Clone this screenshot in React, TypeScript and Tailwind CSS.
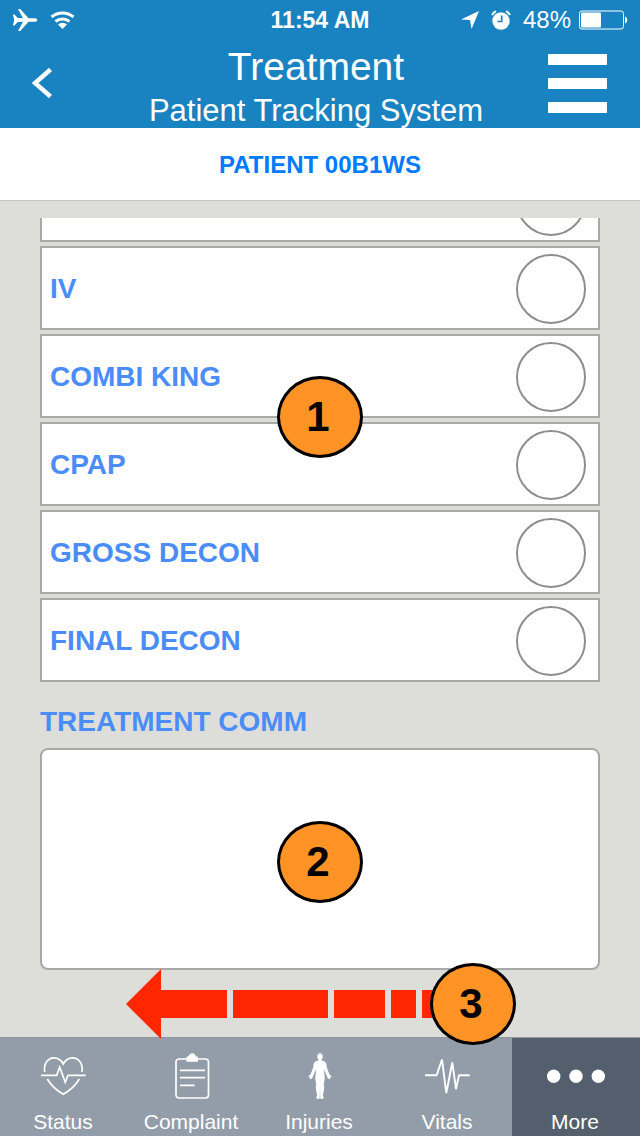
import type { ReactNode } from "react";

const treatments = ["IV", "COMBI KING", "CPAP", "GROSS DECON", "FINAL DECON"];

function Marker({ value, className }: { value: number; className: string }) {
  return (
    <span
      className={`pointer-events-none absolute z-20 flex h-[82px] w-[86px] items-center justify-center rounded-[50%] border-3 border-black bg-[#ff9326] pr-1 text-[42px] leading-none font-bold text-black ${className}`}
    >
      {value}
    </span>
  );
}

function StatusBar() {
  return (
    <div className="grid h-10 grid-cols-[1fr_auto_1fr] items-center px-3 text-2xl leading-none">
      <div className="flex items-center gap-3">
        <svg width="26" height="24" viewBox="0 0 26 24" fill="currentColor" aria-hidden="true">
          <path d="M1 6.500h1.500l3.300 3.600 5.200.2L6 1h2.300l8.200 9.200h6.300c1.400 0 2.500.7 2.500 1.800s-1.100 1.800-2.500 1.800h-6.300L8.300 23H6l5-9.300-5.200.2-3.300 3.600H1L2.200 12z" />
        </svg>
        <svg width="26" height="20" viewBox="0 0 26 20" fill="none" stroke="currentColor" strokeWidth="3" aria-hidden="true">
          <path d="M1.500 7a17 17 0 0 1 22 0M5.500 11.500a11 11 0 0 1 14 0" />
          <path d="M12.500 19l-4.500-4.500a6.500 6.500 0 0 1 9 0z" fill="currentColor" stroke="none" />
        </svg>
      </div>
      <span className="text-[23px] font-bold">11:54 AM</span>
      <div className="flex items-center justify-end gap-3">
        <svg width="18" height="18" viewBox="0 0 18 18" fill="currentColor" aria-hidden="true">
          <path d="M18 0L10.500 18 9 9 0 8.600z" />
        </svg>
        <svg width="20" height="20" viewBox="0 0 20 20" fill="none" stroke="currentColor" aria-hidden="true">
          <circle cx="10" cy="11" r="8.700" fill="currentColor" stroke="none" />
          <path d="M1 5a9 9 0 0 1 4-3.800M19 5a9 9 0 0 0-4-3.800" strokeWidth="2" />
          <path d="M10.700 5.500v6H6.500" stroke="#1983c1" strokeWidth="1.700" />
        </svg>
        <span>48%</span>
        <svg className="-ml-1" width="49" height="20" viewBox="0 0 49 20" aria-hidden="true">
          <rect x=".5" y="1" width="44" height="18" rx="2.500" fill="none" stroke="currentColor" />
          <rect x="2" y="2.500" width="20" height="15" rx="1" fill="currentColor" />
          <path d="M46 6.500c3 1 3 6 0 7z" fill="currentColor" />
        </svg>
      </div>
    </div>
  );
}

function Header() {
  return (
    <header className="bg-[#1983c1] text-white">
      <StatusBar />
      <div className="grid h-[88px] grid-cols-[1fr_auto_1fr] items-center px-8">
        <button type="button" aria-label="Back" className="mb-0.5 justify-self-start">
          <svg width="22" height="30" viewBox="0 0 22 30" fill="none" stroke="currentColor" strokeWidth="4.500" aria-hidden="true">
            <path d="M18.500 1.500L3 15l15.500 13.500" />
          </svg>
        </button>
        <div className="pr-2 text-center">
          <h1 className="text-[39px] leading-[54px]">Treatment</h1>
          <p className="text-[31px] leading-[34px]">Patient Tracking System</p>
        </div>
        <button type="button" aria-label="Menu" className="mb-0.5 flex w-[60px] flex-col gap-[13px] justify-self-end pr-px">
          <span className="h-[11px] bg-white" />
          <span className="h-[11px] bg-white" />
          <span className="h-[11px] bg-white" />
        </button>
      </div>
    </header>
  );
}

function TreatmentRow({ name, label }: { name?: string; label?: string }) {
  return (
    <label className="flex h-[84px] shrink-0 items-center justify-between border-2 border-[#a9a9a9] bg-white pt-0.5 pr-3 pl-2">
      <span>{name}</span>
      <input
        type="checkbox"
        aria-label={label}
        className="size-[70px] appearance-none rounded-full border-2 border-[#8e8e8e] bg-white checked:bg-[#4b8df8]"
      />
    </label>
  );
}

function Tab({ label, active = false, children }: { label: string; active?: boolean; children: ReactNode }) {
  return (
    <a
      href="#"
      className={`flex flex-col items-center gap-2 border-t pt-[14px] text-[21px] leading-7 text-white ${
        active ? "border-[#999b96] bg-[#545f6d]" : "border-[#8f969e] bg-[#939daa]"
      }`}
    >
      {children}
      <span className="pr-0.5">{label}</span>
    </a>
  );
}

function TabBar() {
  return (
    <nav className="grid grid-cols-5">
      <Tab label="Status">
        <svg width="48" height="48" viewBox="0 0 48 48" fill="none" stroke="currentColor" strokeWidth="1.700" aria-hidden="true">
          <path d="M4.700 20C3.500 11.500 8 5.800 14 5.800c4.500 0 7.500 2.800 9.300 6.200C25 8.600 28 5.800 32.500 5.800c6.200 0 10.700 5.700 9.500 14.200" />
          <path d="M1 23.300h15.700l3-8 5.600 15 2.700-7h17.700M7.300 27c3.700 6.400 9.600 11.500 16 15.300 6.400-3.800 12.300-8.900 16-15.300" />
        </svg>
      </Tab>
      <Tab label="Complaint">
        <svg width="48" height="48" viewBox="0 0 48 48" fill="none" stroke="currentColor" strokeWidth="1.700" aria-hidden="true">
          <rect x="8" y="7" width="32.500" height="39" rx="3" />
          <path d="M12 18.300h25M12 25.700h25M12 33.300h14.500" />
          <path d="M18.500 9.700V5.500c0-.8.600-1.200 2-1.300.8-1.500 1.700-2.900 3.700-2.900s2.900 1.400 3.700 2.900c1.400.1 2 .5 2 1.300v4.200z" fill="currentColor" stroke="none" />
        </svg>
      </Tab>
      <Tab label="Injuries">
        <svg width="48" height="48" viewBox="0 0 48 48" fill="currentColor" stroke="currentColor" strokeWidth=".9" aria-hidden="true">
          <path d="M24 1.800c-1.900 0-2.600 1.200-2.300 3 .2 1.300.6 2 1 2.500v1.500c-2.300.9-4.300.8-4.700 3.700-.1 3-1 4.400-1.600 6.500-.6 1.900-1.400 3.400-2.600 4.400-.7.500-1 .9-.8 1.300l.8-.3.300 2.300 1.500-.4c1-2.500 2.400-4.600 3.200-7.200l1.200-3.300c.3 2.500.4 4.200.2 6-.6 3.200-.6 6 .2 9 .4 2-.5 4.200 0 6.300l1 5.400c.2 1.500-.8 3-.5 3.900h2.300c.3-1.600 0-2.800.1-4.400.2-3 .6-5.300.7-8 .1 2.700.5 5 .7 8 .1 1.600-.2 2.800.1 4.400h2.300c.3-.9-.7-2.400-.5-3.900l1-5.400c.5-2.100-.4-4.300 0-6.300.8-3 .8-5.800.2-9-.2-1.800-.1-3.500.2-6l1.200 3.300c.8 2.600 2.200 4.700 3.200 7.200l1.500.4.300-2.300.8.300c.2-.4-.1-.8-.8-1.300-1.200-1-2-2.500-2.600-4.400-.6-2.100-1.500-3.500-1.600-6.500-.4-2.900-2.400-2.800-4.700-3.700V7.300c.4-.5.800-1.200 1-2.500.3-1.800-.4-3-2.300-3z" />
        </svg>
      </Tab>
      <Tab label="Vitals">
        <svg width="48" height="48" viewBox="0 0 48 48" fill="none" stroke="currentColor" strokeWidth="1.900" strokeLinejoin="bevel" aria-hidden="true">
          <path d="M1 23.300h11.700L18 7.500l4.300 33.500 6-30.500L32 37l3-13.700h10.700" />
        </svg>
      </Tab>
      <Tab label="More" active>
        <svg width="60" height="48" viewBox="0 0 60 48" fill="currentColor" aria-hidden="true">
          <circle cx="7.700" cy="24.300" r="6.700" />
          <circle cx="30" cy="24.300" r="6.700" />
          <circle cx="52.300" cy="24.300" r="6.700" />
        </svg>
      </Tab>
    </nav>
  );
}

export default function App() {
  return (
    <div className="flex min-h-screen flex-col bg-[#dddeda] font-['Liberation_Sans',Arial,sans-serif]">
      <Header />
      <h2 className="border-b border-[#c5c6c2] bg-white pt-px text-center text-2xl leading-[71px] font-bold text-[#007aff]">
        PATIENT 00B1WS
      </h2>
      <main className="flex flex-1 flex-col px-10 pt-[17px] text-[28px] font-bold text-[#4b8df8]">
        <div className="relative">
          <div className="flex h-[464px] flex-col justify-end gap-1 overflow-hidden">
            <TreatmentRow label="Previous treatment" />
            {treatments.map((name) => (
              <TreatmentRow key={name} name={name} />
            ))}
          </div>
          <Marker value={1} className="top-[158px] left-1/2 -translate-x-1/2" />
        </div>
        <label htmlFor="comments" className="pt-5 pb-1.5 leading-10">
          TREATMENT COMM
        </label>
        <div className="relative">
          <textarea
            id="comments"
            className="block h-[222px] w-full resize-none rounded-lg border-2 border-[#a9a9a9] bg-white p-3 font-normal text-black outline-none"
          />
          <Marker value={2} className="top-[73px] left-1/2 -translate-x-1/2" />
        </div>
        <div className="relative h-[67px]">
          <div className="absolute -top-[7px] left-1/2 z-10 h-[82px] w-[390px] -translate-x-[194px]">
            <svg className="absolute top-[6px] left-0" width="310" height="70" viewBox="0 0 310 70" fill="#ff2600" aria-hidden="true">
              <path d="M0 35L35 0v21h66v28H35v21zM107 21h95v28h-95zM208 21h51v28h-51zM265 21h25v28h-25zM296 21h14v28h-14z" />
            </svg>
            <Marker value={3} className="top-0 right-0" />
          </div>
        </div>
      </main>
      <TabBar />
    </div>
  );
}
